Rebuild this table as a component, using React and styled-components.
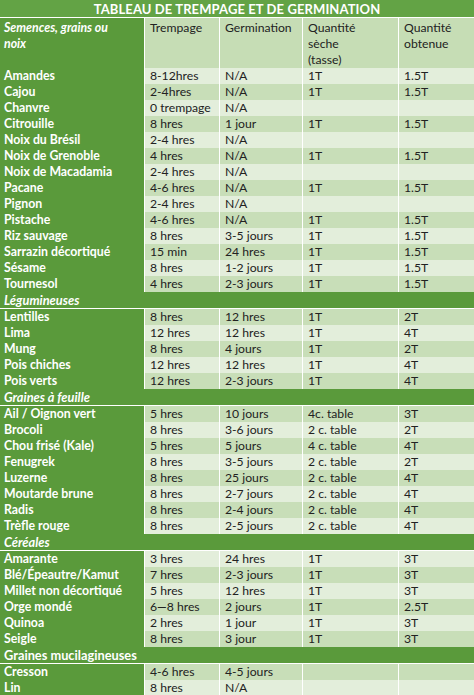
import React from 'react';
import styled, {createGlobalStyle} from 'styled-components';

const Global = createGlobalStyle`
  body {
    margin: 0;
    background: #ffffff;
    font-family: Lato, "Liberation Sans", sans-serif;
  }
`;

const 진녹 = '#5a9a3b';
const 밝음 = '#e3eedb';
const 중간 = '#c8deb8';
const 머리 = '#c6ddb5';

const COLS = '144px 74px 82px 95px 1fr';

const Table = styled.div`
  width: 474px;
  display: flex;
  flex-direction: column;
  gap: 1px;
  background: #ffffff;
`;

const Title = styled.div`
  height: 17px;
  background: #63a345;
  color: #ffffff;
  font-weight: 700;
  font-size: 13px;
  display: flex;
  align-items: center;
  justify-content: center;
  letter-spacing: 0.1px;
`;

const Row = styled.div`
  display: grid;
  grid-template-columns: ${COLS};
  column-gap: 1px;
  height: ${props => props.$h || '15px'};
`;

const NameCell = styled.div`
  background: ${진녹};
  color: #ffffff;
  font-weight: 700;
  font-size: 12.3px;
  padding: 0 4px;
  display: flex;
  align-items: ${props => props.$top ? 'flex-start' : 'center'};
  font-style: ${props => props.$italic ? 'italic' : 'normal'};
  line-height: 16px;
  padding-top: ${props => props.$top ? '2px' : '0'};
  white-space: nowrap;
`;

const Cell = styled.div`
  background: ${props => props.$bg};
  color: #222222;
  font-size: 12.2px;
  padding: 0 5px;
  display: flex;
  align-items: ${props => props.$top ? 'flex-start' : 'center'};
  line-height: 16px;
  padding-top: ${props => props.$top ? '2px' : '0'};
  white-space: ${props => props.$top ? 'normal' : 'nowrap'};
`;

const Section = styled.div`
  height: 16px;
  background: ${진녹};
  color: #ffffff;
  font-weight: 700;
  font-size: 12.8px;
  font-style: ${props => props.$italic ? 'italic' : 'normal'};
  padding: 0 4px;
  display: flex;
  align-items: center;
`;

const 목록 = [
  ['Amandes', '8-12hres', 'N/A', '1T', '1.5T'],
  ['Cajou', '2-4hres', 'N/A', '1T', '1.5T'],
  ['Chanvre', '0 trempage', 'N/A', '', ''],
  ['Citrouille', '8 hres', '1 jour', '1T', '1.5T'],
  ['Noix du Brésil', '2-4 hres', 'N/A', '', ''],
  ['Noix de Grenoble', '4 hres', 'N/A', '1T', '1.5T'],
  ['Noix de Macadamia', '2-4 hres', 'N/A', '', ''],
  ['Pacane', '4-6 hres', 'N/A', '1T', '1.5T'],
  ['Pignon', '2-4 hres', 'N/A', '', ''],
  ['Pistache', '4-6 hres', 'N/A', '1T', '1.5T'],
  ['Riz sauvage', '8 hres', '3-5 jours', '1T', '1.5T'],
  ['Sarrazin décortiqué', '15 min', '24 hres', '1T', '1.5T'],
  ['Sésame', '8 hres', '1-2 jours', '1T', '1.5T'],
  ['Tournesol', '4 hres', '2-3 jours', '1T', '1.5T'],
  {section: 'Légumineuses', italic: true},
  ['Lentilles', '8 hres', '12 hres', '1T', '2T'],
  ['Lima', '12 hres', '12 hres', '1T', '4T'],
  ['Mung', '8 hres', '4 jours', '1T', '2T'],
  ['Pois chiches', '12 hres', '12 hres', '1T', '4T'],
  ['Pois verts', '12 hres', '2-3 jours', '1T', '4T'],
  {section: 'Graines à feuille', italic: true},
  ['Ail / Oignon vert', '5 hres', '10 jours', '4c. table', '3T'],
  ['Brocoli', '8 hres', '3-6 jours', '2 c. table', '2T'],
  ['Chou frisé (Kale)', '5 hres', '5 jours', '4 c. table', '4T'],
  ['Fenugrek', '8 hres', '3-5 jours', '2 c. table', '2T'],
  ['Luzerne', '8 hres', '25 jours', '2 c. table', '4T'],
  ['Moutarde brune', '8 hres', '2-7 jours', '2 c. table', '4T'],
  ['Radis', '8 hres', '2-4 jours', '2 c. table', '4T'],
  ['Trèfle rouge', '8 hres', '2-5 jours', '2 c. table', '4T'],
  {section: 'Céréales', italic: true},
  ['Amarante', '3 hres', '24 hres', '1T', '3T'],
  ['Blé/Épeautre/Kamut', '7 hres', '2-3 jours', '1T', '3T'],
  ['Millet non décortiqué', '5 hres', '12 hres', '1T', '3T'],
  ['Orge mondé', '6—8 hres', '2 jours', '1T', '2.5T'],
  ['Quinoa', '2 hres', '1 jour', '1T', '3T'],
  ['Seigle', '8 hres', '3 jour', '1T', '3T'],
  {section: 'Graines mucilagineuses', italic: false},
  ['Cresson', '4-6 hres', '4-5 jours', '', ''],
  ['Lin', '8 hres', 'N/A', '', ''],
];

export default function App() {
  return (
    <>
      <Global />
      <Table>
        <Title>TABLEAU DE TREMPAGE ET DE GERMINATION</Title>
        <Row $h="49px">
          <NameCell $top $italic>Semences, grains ou<br />noix</NameCell>
          <Cell $bg={머리} $top>Trempage</Cell>
          <Cell $bg={머리} $top>Germination</Cell>
          <Cell $bg={머리} $top>Quantité<br />sèche<br />(tasse)</Cell>
          <Cell $bg={머리} $top>Quantité<br />obtenue</Cell>
        </Row>
        {목록.map((줄, i) => {
          if (!Array.isArray(줄)) {
            return <Section key={i} $italic={줄.italic}>{줄.section}</Section>;
          }
          const bg = i % 2 === 0 ? 밝음 : 중간;
          return (
            <Row key={i}>
              <NameCell>{줄[0]}</NameCell>
              {줄.slice(1).map((값, j) => (
                <Cell key={j} $bg={bg}>{값}</Cell>
              ))}
            </Row>
          );
        })}
      </Table>
    </>
  );
}
